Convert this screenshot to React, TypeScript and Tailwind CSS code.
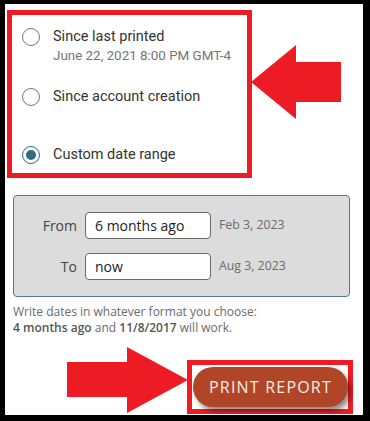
import React from "react";

// Report range picker with red annotation boxes and arrows over it.
function Radio({ checked }: { checked?: boolean }) {
  return (
    <span
      className={`flex h-[18px] w-[18px] shrink-0 items-center justify-center rounded-full border-[1.5px] ${
        checked ? "border-[#2b6f7e]" : "border-[#767676]"
      }`}
    >
      {checked && <span className="h-[10px] w-[10px] rounded-full bg-[#2b6f7e]" />}
    </span>
  );
}

function DateRow({ label, value, date }: { label: string; value: string; date: string }) {
  return (
    <div className="flex items-center">
      <span className="w-[71px] pr-[8px] text-right text-[14px] text-[#444]">{label}</span>
      <div className="flex h-[27px] w-[126px] items-center rounded-[4px] border border-[#6b6b6b] bg-white px-[9px] text-[14px] text-[#222]">
        {value}
      </div>
      <span className="pl-[8px] text-[12.3px] text-[#6b6b6b]">{date}</span>
    </div>
  );
}

export default function App() {
  return (
    <div className="relative h-[421px] w-[370px] bg-black pb-[6px] pl-[5px] pr-[7px] pt-[4px]">
      <div className="flex h-full flex-col bg-white">
        <div
          className="ml-[2px] mt-[6px] h-[168px] w-[245px] border-[5px] border-[#ed1c24] pl-[10px] pt-[12px] text-[14.5px] text-[#333]"
          style={{ fontFamily: "Roboto, sans-serif" }}
        >
          <div className="flex gap-[13px]">
            <div className="mt-[1px]">
              <Radio />
            </div>
            <div>
              <div className="leading-[20px]">Since last printed</div>
              <div className="text-[13.4px] leading-[18px] text-[#757575]">June 22, 2021 8:00 PM GMT-4</div>
            </div>
          </div>
          <div className="mt-[22px] flex items-center gap-[13px] leading-[20px]">
            <Radio />
            <span>Since account creation</span>
          </div>
          <div className="mt-[38px] flex items-center gap-[13px] leading-[20px]">
            <Radio checked />
            <span>Custom date range</span>
          </div>
        </div>

        <div style={{ fontFamily: '"Open Sans", sans-serif' }}>
          <div className="ml-[8px] mt-[17px] flex h-[102px] w-[337px] flex-col justify-center gap-[14px] rounded-[4px] border border-[#4f7f86] bg-[#dcdcdc]">
            <DateRow label="From" value="6 months ago" date="Feb 3, 2023" />
            <DateRow label="To" value="now" date="Aug 3, 2023" />
          </div>
          <p className="ml-[8px] mt-[7px] text-[12px] leading-[16px] text-[#6b6b6b]">
            Write dates in whatever format you choose:
            <br />
            <b className="font-semibold text-[#555]">4 months ago</b> and{" "}
            <b className="font-semibold text-[#555]">11/8/2017</b> will work.
          </p>
          <div className="mr-[10px] mt-[24px] flex justify-end">
            <div className="flex h-[54px] w-[166px] items-center border-[5px] border-[#ed1c24] pl-[1px]">
              <button className="h-[40px] w-[155px] rounded-full bg-[#b04527] text-[16px] tracking-[1.2px] text-[#f6eeea] shadow-[3px_4px_5px_rgba(0,0,0,0.45)]">
                PRINT REPORT
              </button>
            </div>
          </div>
        </div>
      </div>

      <svg className="pointer-events-none absolute left-0 top-0" width="370" height="421" viewBox="0 0 370 421">
        <polygon points="251,82 296,45 296,62 341,62 341,102 296,102 296,119" fill="#ed1c24" />
        <polygon points="67,362 127,362 127,347 188,380 127,413 127,397 67,397" fill="#ed1c24" />
      </svg>
    </div>
  );
}
